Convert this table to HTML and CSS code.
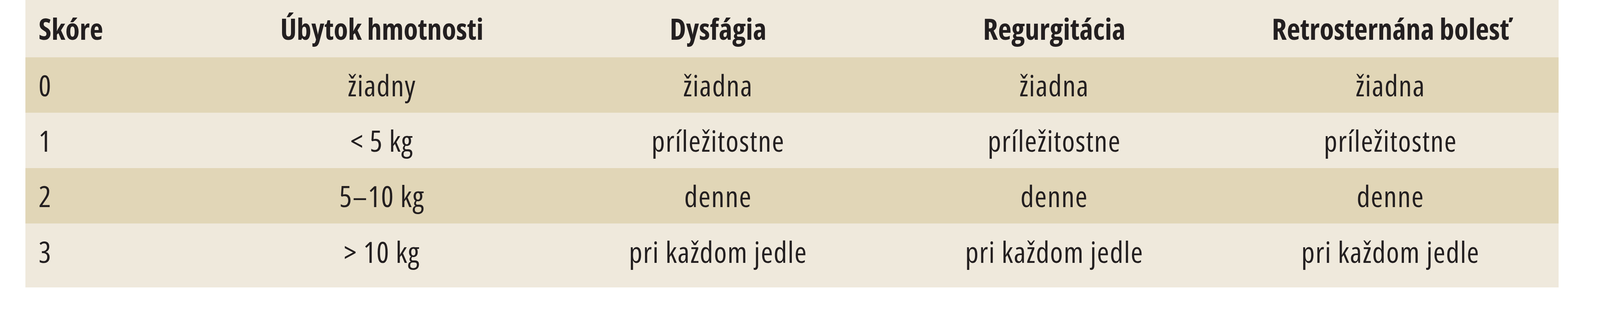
FILE: index.html
```html
<!DOCTYPE html>
<html lang="sk">
<head>
<meta charset="utf-8">
<title>Skóre</title>
<link rel="stylesheet" href="styles.css">
</head>
<body>
<table class="score-table">
  <colgroup>
    <col class="col-score">
    <col class="col-data">
    <col class="col-data">
    <col class="col-data">
    <col class="col-data">
  </colgroup>
  <thead>
    <tr class="row-head">
      <th class="cell-first">Skóre</th>
      <th>Úbytok hmotnosti</th>
      <th>Dysfágia</th>
      <th>Regurgitácia</th>
      <th>Retrosternána bolesť</th>
    </tr>
  </thead>
  <tbody>
    <tr class="row-dark">
      <td class="cell-first">0</td>
      <td>žiadny</td>
      <td>žiadna</td>
      <td>žiadna</td>
      <td>žiadna</td>
    </tr>
    <tr class="row-light">
      <td class="cell-first">1</td>
      <td>&lt; 5 kg</td>
      <td>príležitostne</td>
      <td>príležitostne</td>
      <td>príležitostne</td>
    </tr>
    <tr class="row-dark">
      <td class="cell-first">2</td>
      <td>5–10 kg</td>
      <td>denne</td>
      <td>denne</td>
      <td>denne</td>
    </tr>
    <tr class="row-light row-last">
      <td class="cell-first">3</td>
      <td>&gt; 10 kg</td>
      <td>pri každom jedle</td>
      <td>pri každom jedle</td>
      <td>pri každom jedle</td>
    </tr>
  </tbody>
</table>
</body>
</html>
```

FILE: styles.css
```css
html, body {
  margin: 0;
  padding: 0;
  background: #ffffff;
}

body {
  padding-left: 1.5836vw;
  font-family: "Open Sans", "Noto Sans", "Liberation Sans", sans-serif;
  color: #231f20;
}

.score-table {
  width: 95.828vw;
  table-layout: fixed;
  border-collapse: collapse;
  border-spacing: 0;
  font-size: 75px;
}

.col-score {
  width: 11.78vw;
}

.col-data {
  width: 21.012vw;
}

.score-table th,
.score-table td {
  padding: 0;
  text-align: center;
  white-space: nowrap;
  vertical-align: top;
}

.score-table th {
  font-weight: 700;
  font-stretch: 75%;
  height: 143px;
  line-height: 139px;
  padding-top: 4px;
}

.score-table td {
  font-weight: 400;
  font-stretch: 75%;
  letter-spacing: 1.8px;
  height: 142px;
  line-height: 142px;
}

.score-table .cell-first {
  text-align: left;
  padding-left: 0.83vw;
}

.row-head {
  background: #efe9dc;
}

.row-dark {
  background: #e1d6b7;
}

.row-light {
  background: #efe9dc;
}

.row-last td {
  height: 143px;
  line-height: 145px;
  padding-bottom: 19px;
}
```
